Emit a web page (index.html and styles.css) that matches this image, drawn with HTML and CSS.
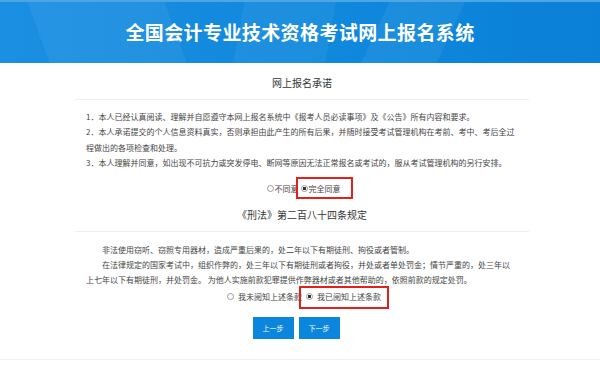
FILE: index.html
```html
<!DOCTYPE html>
<html lang="zh-CN">
<head>
    <meta charset="UTF-8" />
    <meta name="viewport" content="width=device-width, initial-scale=1.0"/>
    <title>全国会计专业技术资格考试网上报名系统</title>
    <link rel="stylesheet" href="styles.css">
</head>
<body>

    <div class="header">
        <h1>全国会计专业技术资格考试网上报名系统</h1>
    </div>

    <div class="main">
        <h2 class="sec-title first">网上报名承诺</h2>
        <div class="sec-text">
            <p>1．本人已经认真阅读、理解并自愿遵守本网上报名系统中《报考人员必读事项》及《公告》所有内容和要求。</p>
            <p>2．本人承诺提交的个人信息资料真实，否则承担由此产生的所有后果，并随时接受考试管理机构在考前、考中、考后全过程做出的各项检查和处理。</p>
            <p>3．本人理解并同意，如出现不可抗力或突发停电、断网等原因无法正常报名或考试的，服从考试管理机构的另行安排。</p>
        </div>

        <div class="choice choice-one">
            <label class="opt"><input type="radio" name="agree">不同意</label>
            <label class="opt marked"><input type="radio" name="agree" checked>完全同意</label>
        </div>

        <h2 class="sec-title second">《刑法》第二百八十四条规定</h2>
        <div class="sec-text law">
            <p class="indent">非法使用窃听、窃照专用器材，造成严重后果的，处二年以下有期徒刑、拘役或者管制。</p>
            <p class="indent">在法律规定的国家考试中，组织作弊的，处三年以下有期徒刑或者拘役，并处或者单处罚金；情节严重的，处三年以上七年以下有期徒刑，并处罚金。 为他人实施前款犯罪提供作弊器材或者其他帮助的，依照前款的规定处罚。</p>
        </div>

        <div class="choice choice-two">
            <label class="opt"><input type="radio" name="read">我未阅知上述条款</label>
            <label class="opt marked"><input type="radio" name="read" checked>我已阅知上述条款</label>
        </div>

        <div class="buttons">
            <button class="step-btn">上一步</button>
            <button class="step-btn">下一步</button>
        </div>
    </div>

    <div class="footer"></div>

</body>
</html>
```

FILE: styles.css
```css
body {
    margin: 0;
    padding: 0;
    font-family: "Noto Sans CJK SC", "Microsoft YaHei", sans-serif;
    background-color: #fff;
    color: #444;
}

.header {
    height: 61px;
    border-top: 2px solid #4ea5e4;
    display: flex;
    align-items: center;
    justify-content: center;
    background:
        linear-gradient(115deg, rgba(255,255,255,0) 0 62%, rgba(255,255,255,0.06) 62% 74%, rgba(255,255,255,0) 74%),
        linear-gradient(70deg, rgba(255,255,255,0) 0 8%, rgba(255,255,255,0.05) 8% 30%, rgba(255,255,255,0) 30%),
        linear-gradient(100deg, rgba(255,255,255,0) 0 40%, rgba(255,255,255,0.05) 40% 55%, rgba(255,255,255,0) 55%),
        linear-gradient(90deg, #1b8fe1, #0d86db 70%, #0a80d6);
}

.header h1 {
    margin: 0;
    color: #fff;
    font-size: 19px;
    font-weight: bold;
    letter-spacing: 0.4px;
    line-height: 24px;
    margin-top: -2px;
}

.main {
    margin: 0 71px 0 75px;
}

.sec-title {
    margin: 0;
    padding-bottom: 10px;
    border-bottom: 1px solid #eeeeee;
    font-size: 10px;
    font-weight: normal;
    line-height: 12px;
    color: #333;
    text-align: center;
}

.sec-title.first {
    padding-top: 14px;
}

.sec-title.second {
    margin-top: 12px;
}

.sec-text {
    width: 430px;
    padding: 9px 0 0 11px;
    font-size: 8px;
    line-height: 15.4px;
}

.sec-text.law {
    padding-top: 10px;
}

.sec-text p {
    margin: 0;
}

.sec-text .indent {
    text-indent: 2em;
}

.choice {
    display: flex;
    justify-content: center;
    font-size: 8px;
    line-height: 16px;
    color: #444;
}

.choice-one {
    margin-top: 10px;
    padding-left: 1px;
}

.choice-two {
    margin-top: 1px;
}

.opt {
    position: relative;
    display: flex;
    align-items: center;
}

.opt input {
    appearance: none;
    -webkit-appearance: none;
    width: 7px;
    height: 7px;
    margin: 0 1px 0 2px;
    border: 1px solid #9a9a9a;
    border-radius: 50%;
    box-sizing: border-box;
    background-color: #fff;
}

.opt input:checked {
    background: radial-gradient(circle, #333 0 1.6px, #fff 2px);
}

.choice-two .opt input {
    margin: 0 4px 0 4px;
}

.choice-one .marked::after {
    content: "";
    position: absolute;
    top: -4px;
    bottom: -2px;
    left: -3px;
    right: -12px;
    border: 2px solid #e3211b;
}

.choice-two .marked::after {
    content: "";
    position: absolute;
    top: -3px;
    bottom: -4px;
    left: -3px;
    right: -8px;
    border: 2px solid #e3211b;
}

.buttons {
    display: flex;
    justify-content: center;
    gap: 5px;
    margin-top: 12px;
    padding-right: 12px;
}

.step-btn {
    width: 41px;
    height: 22px;
    padding: 0;
    border: none;
    background-color: #0b86dc;
    color: #fff;
    font-family: "Noto Sans CJK SC", sans-serif;
    font-size: 7px;
    cursor: pointer;
}

.step-btn:hover {
    background-color: #0a78c6;
}

.footer {
    margin-top: 20px;
    border-top: 1px solid #f0f0f0;
}
```
